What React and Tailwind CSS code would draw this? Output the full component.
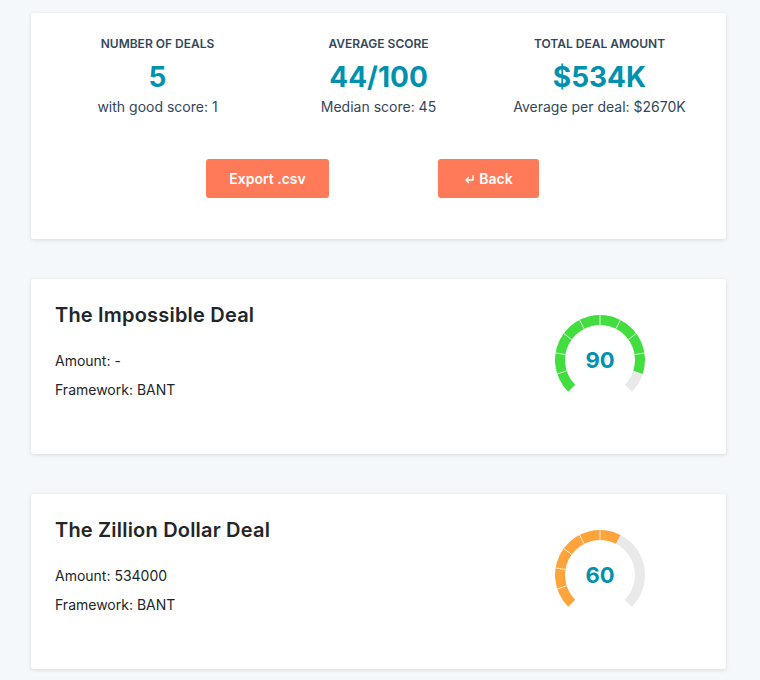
const FONT = { fontFamily: 'Inter, "Liberation Sans", sans-serif' }

function point(cx, cy, r, deg) {
    const a = (deg * Math.PI) / 180
    return [cx + r * Math.cos(a), cy - r * Math.sin(a)]
}

function sector(cx, cy, ro, ri, a0, a1) {
    const [x0, y0] = point(cx, cy, ro, a0)
    const [x1, y1] = point(cx, cy, ro, a1)
    const [x2, y2] = point(cx, cy, ri, a1)
    const [x3, y3] = point(cx, cy, ri, a0)
    const large = Math.abs(a0 - a1) > 180 ? 1 : 0
    return `M${x0} ${y0} A${ro} ${ro} 0 ${large} 1 ${x1} ${y1} L${x2} ${y2} A${ri} ${ri} 0 ${large} 0 ${x3} ${y3} Z`
}

function Gauge({ score, color }) {
    const filled = Math.round(score / 10)
    const step = 27
    const end = 225 - filled * step
    return (
        <div className="relative w-[100px] h-[100px]">
            <svg width="100" height="100" viewBox="0 0 100 100">
                {filled < 10 && <path d={sector(50, 50, 45, 35, end, -45)} fill="#e9e9e9" />}
                {filled > 0 && <path d={sector(50, 50, 45, 35, 225, end)} fill={color} />}
                {Array.from({ length: filled - 1 }).map((_, i) => {
                    const a = 225 - (i + 1) * step
                    const [x0, y0] = point(50, 50, 35, a)
                    const [x1, y1] = point(50, 50, 45, a)
                    return <line key={i} x1={x0} y1={y0} x2={x1} y2={y1} stroke="#ffffff" strokeOpacity="0.85" strokeWidth="1" />
                })}
            </svg>
            <div className="absolute inset-0 flex items-center justify-center text-[22px] font-bold text-[#0091ae]">
                {score}
            </div>
        </div>
    )
}

function Stat({ label, value, sub }) {
    return (
        <div className="flex-1 flex flex-col items-center">
            <div className="text-[12px] leading-4 font-semibold uppercase text-[#33475b]">{label}</div>
            <div className="mt-[7px] text-[28px] leading-9 font-bold text-[#0091ae]">{value}</div>
            <div className="mt-[2px] text-[14px] leading-5 text-[#33475b]">{sub}</div>
        </div>
    )
}

function DealCard({ title, amount, framework, score, color }) {
    return (
        <div className="bg-white rounded-[3px] shadow-[0_1px_4px_rgba(0,0,0,0.12)] h-[175px] flex justify-between pl-6 pr-[76px] pt-[22px]">
            <div>
                <h3 className="text-[20px] leading-7 font-semibold text-[#222629] tracking-[0.2px]">{title}</h3>
                <p className="mt-[22px] text-[14px] leading-5 text-[#222629]">Amount: {amount}</p>
                <p className="mt-[9px] text-[14px] leading-5 text-[#222629]">Framework: {framework}</p>
            </div>
            <div className="mt-[9px]">
                <Gauge score={score} color={color} />
            </div>
        </div>
    )
}

export default function App() {
    return (
        <div className="min-h-[680px] bg-[#f5f8fa] px-[31px] pt-[13px] pb-4" style={FONT}>
            <div className="flex flex-col gap-10 w-[695px]">
                {/* Resumen */}
                <div className="bg-white rounded-[3px] shadow-[0_1px_4px_rgba(0,0,0,0.12)] px-4 pt-[23px] pb-[41px]">
                    <div className="flex">
                        <Stat label="Number of deals" value="5" sub="with good score: 1" />
                        <Stat label="Average score" value="44/100" sub="Median score: 45" />
                        <Stat label="Total deal amount" value="$534K" sub="Average per deal: $2670K" />
                    </div>
                    <div className="mt-[42px] ml-[159px] flex gap-[109px]">
                        <button className="w-[123px] h-[39px] rounded-[3px] bg-[#ff7a59] text-white text-[14px] font-semibold">
                            Export .csv
                        </button>
                        <button className="w-[101px] h-[39px] rounded-[3px] bg-[#ff7a59] text-white text-[14px] font-semibold inline-flex items-center justify-center gap-1">
                            <svg width="11" height="10" viewBox="0 0 11 10" fill="none" stroke="white" strokeWidth="1.4" strokeLinecap="round" strokeLinejoin="round">
                                <path d="M9 1.5V6H2M4.5 3.5L2 6L4.5 8.5" />
                            </svg>
                            Back
                        </button>
                    </div>
                </div>

                <DealCard title="The Impossible Deal" amount="-" framework="BANT" score={90} color="#42dd3f" />
                <DealCard title="The Zillion Dollar Deal" amount="534000" framework="BANT" score={60} color="#ffa33b" />
            </div>
        </div>
    )
}
